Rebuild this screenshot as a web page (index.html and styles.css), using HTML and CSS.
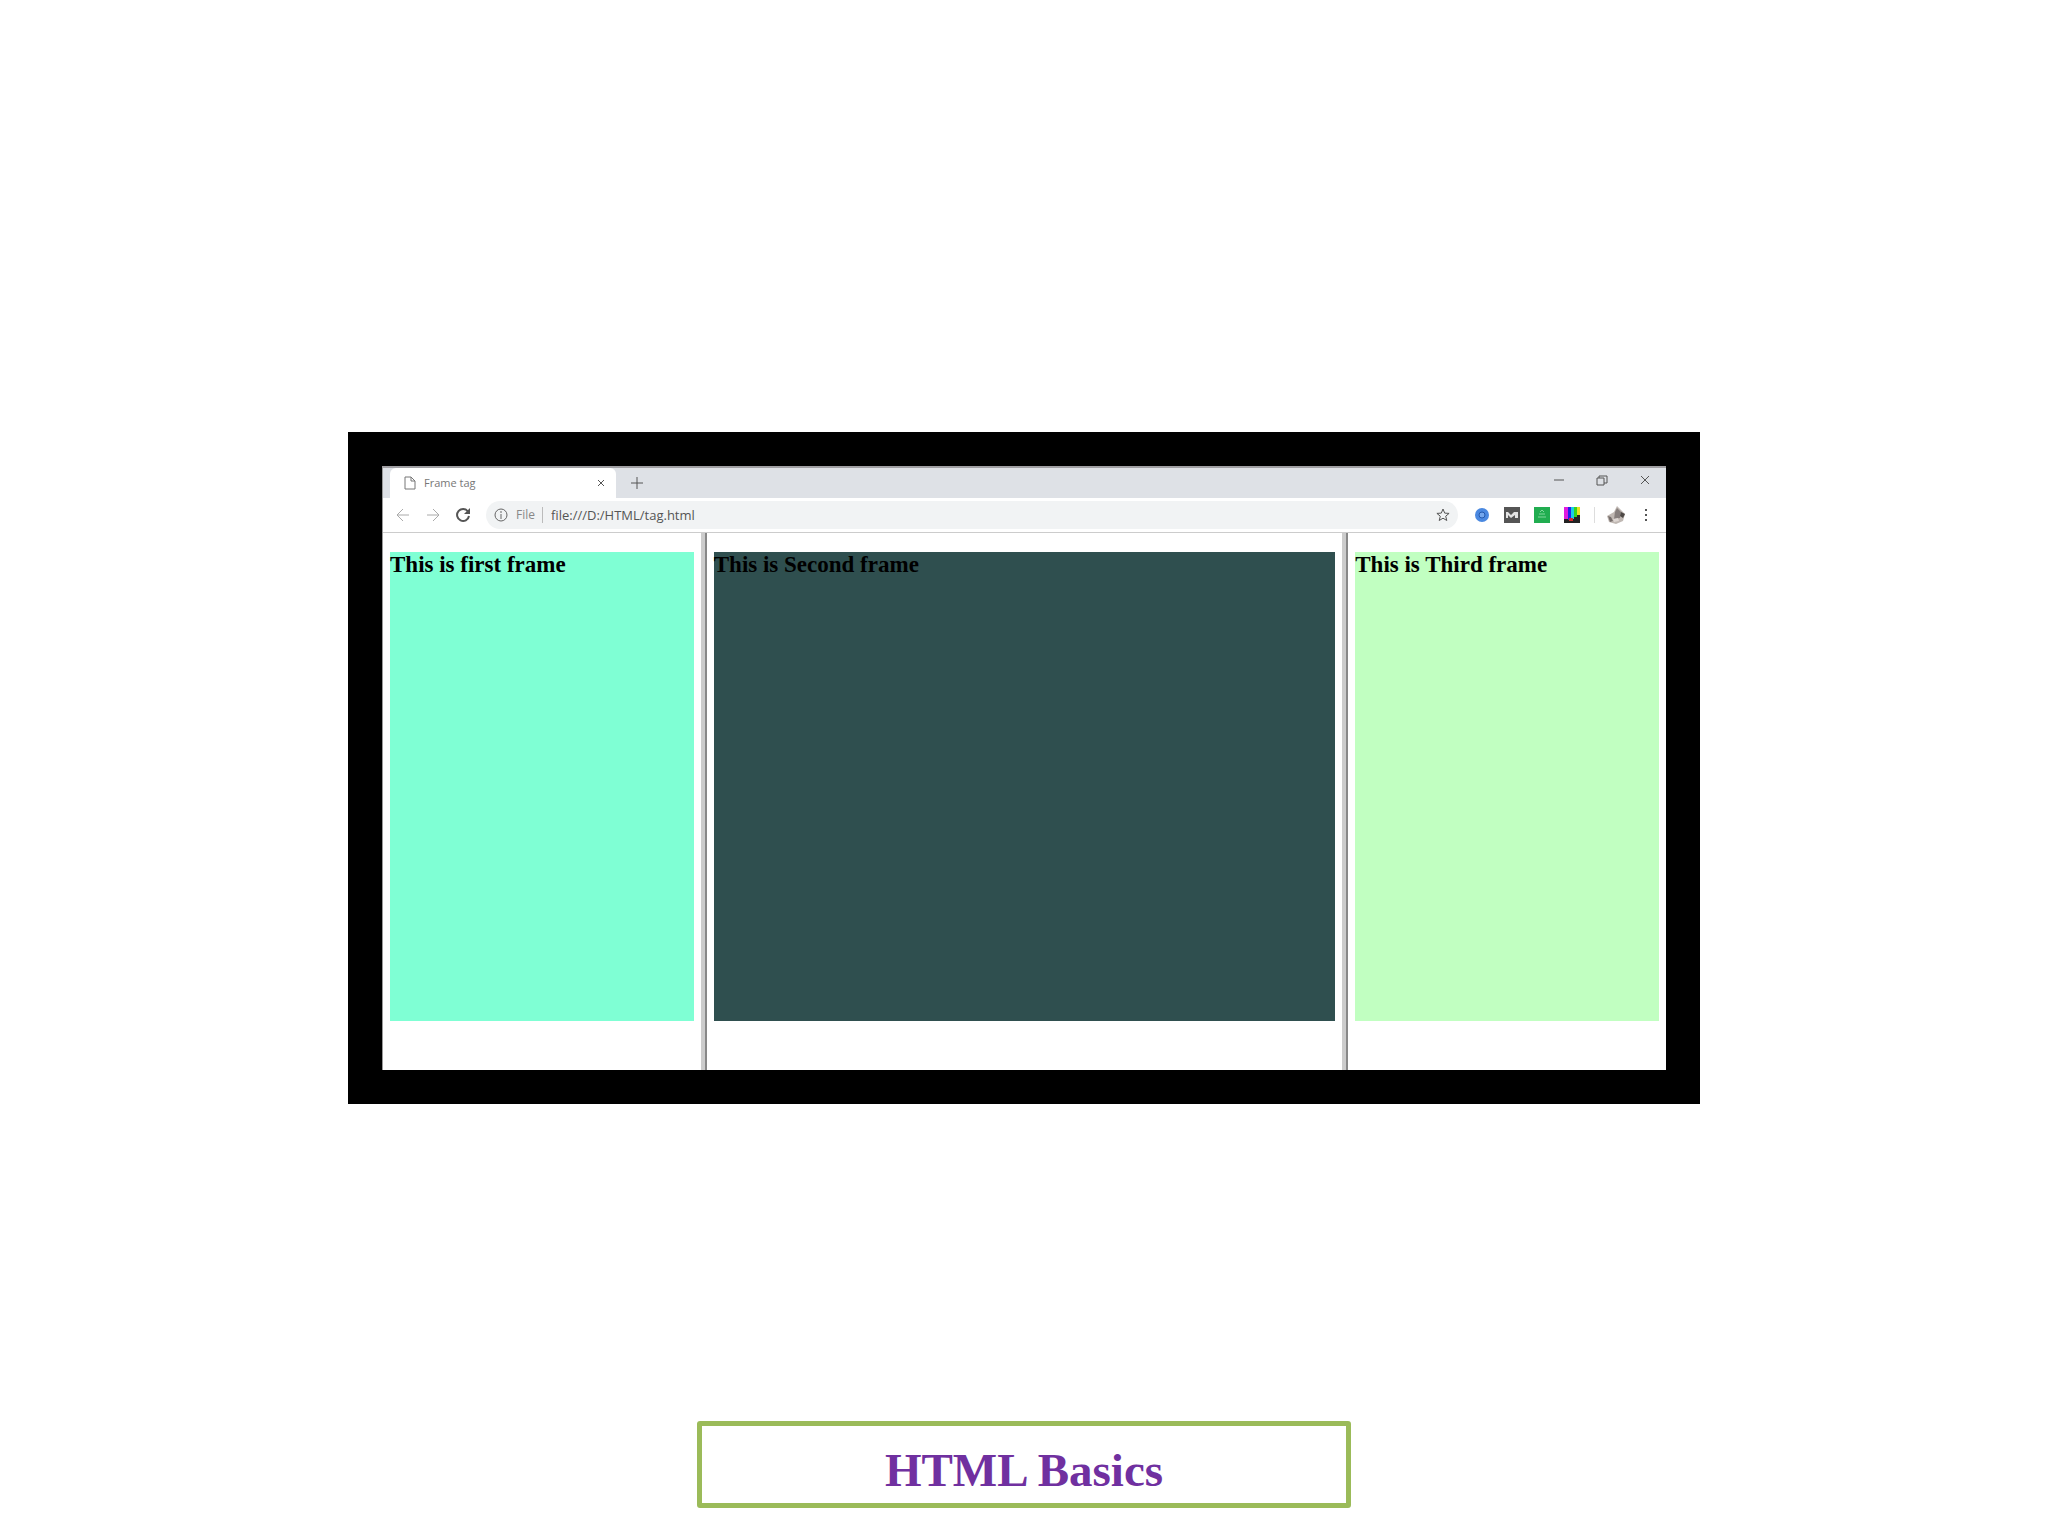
FILE: index.html
```html
<!DOCTYPE html>
<html lang="en">
<head>
<meta charset="utf-8">
<title>HTML Basics</title>
<link rel="stylesheet" href="styles.css">
</head>
<body>
<main class="slide">
  <section class="figure" aria-label="Frame tag example">
    <div class="browser">
      <div class="tabstrip">
        <div class="tab">
          <svg class="page-icon" width="12" height="14" viewBox="0 0 12 14"><path d="M1 1h6l4 4v8H1zM7 1v4h4"/></svg>
          <span class="tab-title">Frame tag</span>
          <button class="tab-close" aria-label="Close tab"><svg width="8" height="8" viewBox="0 0 8 8"><path d="M1 1l6 6M7 1l-6 6"/></svg></button>
        </div>
        <button class="new-tab" aria-label="New tab"><svg width="12" height="12" viewBox="0 0 12 12"><path d="M6 0v12M0 6h12"/></svg></button>
        <div class="window-controls">
          <button aria-label="Minimize"><svg width="12" height="12" viewBox="0 0 12 12"><path d="M1 6h10"/></svg></button>
          <button aria-label="Restore"><svg width="12" height="12" viewBox="0 0 12 12"><path d="M1 4h7v7H1zM3 4V2h8v7H8"/></svg></button>
          <button aria-label="Close"><svg width="12" height="12" viewBox="0 0 12 12"><path d="M2 2l8 8M10 2l-8 8"/></svg></button>
        </div>
      </div>
      <div class="toolbar">
        <button class="tool faint" aria-label="Back"><svg width="14" height="14" viewBox="0 0 14 14"><path d="M13 7H1M7 1L1 7l6 6"/></svg></button>
        <button class="tool faint" aria-label="Forward"><svg width="14" height="14" viewBox="0 0 14 14"><path d="M1 7h12M7 1l6 6-6 6"/></svg></button>
        <button class="tool reload" aria-label="Reload"><svg width="16" height="16" viewBox="0 0 16 16"><path d="M13 4.500A6 6 0 1 0 14 9"/><path class="solid" d="M15 1v6H9z"/></svg></button>
        <div class="omnibox">
          <svg class="info" width="14" height="14" viewBox="0 0 14 14"><circle cx="7" cy="7" r="6"/><path d="M7 6v5M7 3v2"/></svg>
          <label class="scheme" for="url">File</label>
          <input class="url" id="url" type="text" value="file:///D:/HTML/tag.html">
          <button class="star" aria-label="Bookmark"><svg width="14" height="14" viewBox="0 0 14 14"><path d="M7 1l1.700 4.100 4.400.3-3.400 2.800 1.100 4.300L7 10.200l-3.800 2.300 1.100-4.300L.9 5.400l4.400-.3z"/></svg></button>
        </div>
        <div class="extensions">
          <button class="tool" aria-label="Blue extension"><svg class="art" width="14" height="14" viewBox="0 0 14 14"><circle cx="7" cy="7" r="7" fill="#4a88e0"/><circle cx="7" cy="7" r="3" fill="#74a7ed" stroke="#2459ad"/></svg></button>
          <button class="tool" aria-label="Mail extension"><svg class="art" width="16" height="16" viewBox="0 0 16 16"><path fill="#555" d="M0 0h16v16H0z"/><path fill="#e4e4e4" d="M2 5h2l3 3 3-3h4v6h-3V8l-4 3-3-3v3H2z"/></svg></button>
          <button class="tool" aria-label="Green extension"><svg class="art" width="16" height="16" viewBox="0 0 16 16"><path fill="#21ad50" d="M0 0h16v16H0z"/><path d="M6 5l2-2 2 2M5 7h6M4 10h8" fill="none" stroke="#80d79a"/></svg></button>
          <button class="tool" aria-label="Color extension"><svg class="art" width="16" height="16" viewBox="0 0 16 16"><path fill="#222" d="M0 0h16v16H0z"/><path fill="#e01be0" d="M0 0h4v12H0z"/><path fill="#2422e8" d="M4 0h3v13H4z"/><path fill="#18cde5" d="M7 0h3v12H7z"/><path fill="#35d51d" d="M10 0h3v10h-3z"/><path fill="#e8df20" d="M13 0h3v8h-3z"/><path fill="#d32a2a" d="M5 11h4v3H5z"/></svg></button>
        </div>
        <button class="tool" aria-label="Profile"><svg class="art" width="18" height="18" viewBox="0 0 18 18"><path fill="#c0b8b3" d="M10 0l4 4 4 4-2 7-7 3-7-2-2-6 7-4z"/><path fill="#877f7d" d="M10 2l4 4-1 6-6 1 1-7z"/><path fill="#4d4845" d="M14 6l4 2-2 4-3-2z"/><path fill="#ddd6d2" d="M6 13l5-1 1 3-5 1z"/><path fill="#766e6b" d="M1 10l3 1 2 4-3 1z"/></svg></button>
        <button class="tool" aria-label="Menu"><svg width="4" height="14" viewBox="0 0 4 14"><path class="solid" d="M1 1h2v2H1zM1 6h2v2H1zM1 11h2v2H1z"/></svg></button>
      </div>
      <div class="frameset">
        <section class="frame"><h2 class="pane first">This is first frame</h2></section>
        <div class="divider"></div>
        <section class="frame"><h2 class="pane second">This is Second frame</h2></section>
        <div class="divider"></div>
        <section class="frame"><h2 class="pane third">This is Third frame</h2></section>
      </div>
    </div>
  </section>
  <h1 class="caption">HTML Basics</h1>
</main>
</body>
</html>
```
FILE: styles.css
```css
* { box-sizing: border-box; }

body {
  margin: 0;
  background: #fff;
  font-family: "Open Sans", "Noto Sans", sans-serif;
}

button {
  display: flex;
  align-items: center;
  justify-content: center;
  padding: 0;
  border: 0;
  background: none;
  color: #555;
}

svg {
  flex: none;
  fill: none;
  stroke: currentColor;
}

.art { stroke: none; }
.solid { fill: currentColor; stroke: none; }

.slide {
  display: flex;
  flex-direction: column;
  align-items: center;
  padding: 432px 32px 28px;
}

.figure {
  width: 100%;
  max-width: 1352px;
  padding: 34px;
  background: #000;
}

.browser {
  border-top: 2px solid #a09fa3;
  border-left: 1px solid #999;
  background: #fff;
}

/* Tab strip */
.tabstrip {
  display: flex;
  height: 30px;
  padding-left: 7px;
  background: #dee1e6;
}

.tab {
  display: flex;
  align-items: center;
  width: 226px;
  padding: 0 9px 0 14px;
  border-radius: 6px 6px 0 0;
  background: #fff;
  color: #777;
}

.tab-title {
  flex: 1;
  margin-left: 8px;
  font-size: 11px;
  line-height: 16px;
}

.tab-close { width: 12px; height: 16px; }
.new-tab { width: 42px; }

.window-controls {
  display: flex;
  margin-left: auto;
}

.window-controls button {
  width: 43px;
  height: 24px;
}

/* Toolbar */
.toolbar {
  display: flex;
  align-items: center;
  height: 35px;
  padding: 0 5px;
  border-bottom: 1px solid #ccc;
}

.tool {
  width: 30px;
  height: 28px;
}

.faint { color: #aaa; }
.reload svg { stroke-width: 2; }

.omnibox {
  display: flex;
  flex: 1;
  align-items: center;
  height: 28px;
  min-width: 0;
  margin: 0 9px 0 8px;
  padding: 0 8px;
  border-radius: 14px;
  background: #f1f3f4;
  color: #666;
}

.scheme {
  margin-left: 8px;
  padding-right: 7px;
  border-right: 1px solid #bbb;
  color: #888;
  font-size: 12px;
  line-height: 16px;
}

.url {
  flex: 1;
  min-width: 0;
  padding: 0 0 0 8px;
  border: 0;
  background: none;
  color: #555;
  font-family: inherit;
  font-size: 13px;
  line-height: 16px;
}

.star { width: 14px; }

.extensions {
  display: flex;
  margin-right: 6px;
  padding-right: 8px;
  background: linear-gradient(#ddd, #ddd) right center / 1px 16px no-repeat;
}

/* Three-column frameset */
.frameset {
  display: grid;
  grid-template-columns: 1fr 6px 2fr 6px 1fr;
}

.frame {
  min-width: 0;
  padding: 19px 7px 49px;
}

.divider {
  border-right: 2px solid #888;
  background: #ccc;
}

.pane {
  min-height: 469px;
  margin: 0;
  color: #000;
  font-family: "Liberation Serif", serif;
  font-size: 23px;
  line-height: 26px;
}

.first { background: #7fffd4; }
.second { background: #2f4f4f; }
.third { background: #c1ffc1; }

.caption {
  width: 100%;
  max-width: 654px;
  margin: 317px 0 0;
  padding: 18px 0 6px;
  border: 5px solid #9bbb59;
  border-radius: 3px;
  color: #7030a0;
  font-family: "Liberation Serif", serif;
  font-size: 47px;
  line-height: 53px;
  text-align: center;
}
```
